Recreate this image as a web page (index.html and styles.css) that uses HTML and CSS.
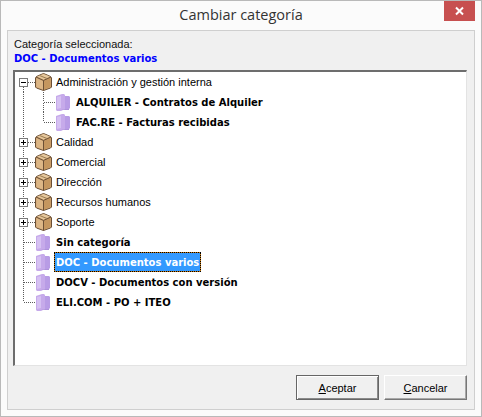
FILE: index.html
```html
<!DOCTYPE html>
<html lang="es">
<head>
<meta charset="utf-8">
<title>Cambiar categoría</title>
<link rel="stylesheet" href="styles.css">
</head>
<body>
<svg class="defs" width="0" height="0" aria-hidden="true">
  <defs>
    <symbol id="box" viewBox="0 0 17 18">
      <path d="M6 1.500 8.500 .5 11 1.500 15.500 3.500 16.500 5v9l-1 1-7 2.500-7-2.500-1-1V5l1-1.500z" fill="#cfa574" stroke="#6b4f35" stroke-linejoin="round"/>
      <path d="M1.500 5 8 8v8.500l-6.500-2.500z" fill="#dcb686"/>
      <path d="M9 8l6.500-3v9L9 16.500z" fill="#c4965f"/>
      <path d="M2 3.500 8.500 1 15 3.500 8.500 6.500z" fill="#e5c79c"/>
      <path d="M1 4 8.500 7.500 16 4M8.500 7.500v10" stroke="#6b4f35" fill="none"/>
      <path d="M4.500 2.500 12 5.500" stroke="#9a7a50" fill="none"/>
    </symbol>
    <symbol id="book" viewBox="0 0 14 17">
      <path d="M0 2 6 0h2l1 1v14l-4 2H1l-1-1z" fill="#c6aaea"/>
      <path d="M9 2h4l1 1v11l-1 1H9z" fill="#b89ce5"/>
      <path d="M1 3 5 2v12l-4 1z" fill="#d6c1f2"/>
      <path d="M5 16l4-1h4v1z" fill="#ae92da"/>
    </symbol>
    <symbol id="plus" viewBox="0 0 9 9">
      <rect x=".5" y=".5" width="8" height="8" fill="#fff" stroke="#7a7a7a"/>
      <path d="M2 4.500h5M4.500 2v5" stroke="#000" fill="none"/>
    </symbol>
    <symbol id="minus" viewBox="0 0 9 9">
      <rect x=".5" y=".5" width="8" height="8" fill="#fff" stroke="#7a7a7a"/>
      <path d="M2 4.500h5" stroke="#000" fill="none"/>
    </symbol>
  </defs>
</svg>
<div class="window">
  <header class="titlebar">
    <h1 class="title">Cambiar categoría</h1>
    <button class="close" type="button" aria-label="Cerrar">
      <svg width="11" height="10" viewBox="0 0 11 10"><path d="M2 1.500 9 8.500M9 1.500 2 8.500" stroke="#fff" stroke-width="2" fill="none"/></svg>
    </button>
  </header>
  <main class="panel">
    <p class="caption">Categoría seleccionada:</p>
    <p class="current">DOC - Documentos varios</p>
    <div class="tree">
      <div class="row">
        <svg class="gutter" width="39" height="20"><path class="dot" d="M13 10.500H20M8.500 15V20"/><use href="#minus" x="4" y="6" width="9" height="9"/><use href="#box" x="20" y="1" width="17" height="18"/></svg>
        <span class="label">Administración y gestión interna</span>
      </div>
      <div class="row">
        <svg class="gutter" width="59" height="20"><path class="dot" d="M8.500 0V20M28.500 0V10M29 10.500H40M28.500 11V20"/><use href="#book" x="41" y="2" width="14" height="17"/></svg>
        <span class="label strong">ALQUILER - Contratos de Alquiler</span>
      </div>
      <div class="row">
        <svg class="gutter" width="59" height="20"><path class="dot" d="M8.500 0V20M28.500 0V10M29 10.500H40"/><use href="#book" x="41" y="2" width="14" height="17"/></svg>
        <span class="label strong">FAC.RE - Facturas recibidas</span>
      </div>
      <div class="row">
        <svg class="gutter" width="39" height="20"><path class="dot" d="M8.500 0V20M13 10.500H20"/><use href="#plus" x="4" y="6" width="9" height="9"/><use href="#box" x="20" y="1" width="17" height="18"/></svg>
        <span class="label">Calidad</span>
      </div>
      <div class="row">
        <svg class="gutter" width="39" height="20"><path class="dot" d="M8.500 0V20M13 10.500H20"/><use href="#plus" x="4" y="6" width="9" height="9"/><use href="#box" x="20" y="1" width="17" height="18"/></svg>
        <span class="label">Comercial</span>
      </div>
      <div class="row">
        <svg class="gutter" width="39" height="20"><path class="dot" d="M8.500 0V20M13 10.500H20"/><use href="#plus" x="4" y="6" width="9" height="9"/><use href="#box" x="20" y="1" width="17" height="18"/></svg>
        <span class="label">Dirección</span>
      </div>
      <div class="row">
        <svg class="gutter" width="39" height="20"><path class="dot" d="M8.500 0V20M13 10.500H20"/><use href="#plus" x="4" y="6" width="9" height="9"/><use href="#box" x="20" y="1" width="17" height="18"/></svg>
        <span class="label">Recursos humanos</span>
      </div>
      <div class="row">
        <svg class="gutter" width="39" height="20"><path class="dot" d="M8.500 0V20M13 10.500H20"/><use href="#plus" x="4" y="6" width="9" height="9"/><use href="#box" x="20" y="1" width="17" height="18"/></svg>
        <span class="label">Soporte</span>
      </div>
      <div class="row">
        <svg class="gutter" width="39" height="20"><path class="dot" d="M8.500 0V20M9 10.500H20"/><use href="#book" x="21" y="2" width="14" height="17"/></svg>
        <span class="label strong">Sin categoría</span>
      </div>
      <div class="row">
        <svg class="gutter" width="39" height="20"><path class="dot" d="M8.500 0V20M9 10.500H20"/><use href="#book" x="21" y="2" width="14" height="17"/></svg>
        <span class="label strong selected">DOC - Documentos varios</span>
      </div>
      <div class="row">
        <svg class="gutter" width="39" height="20"><path class="dot" d="M8.500 0V20M9 10.500H20"/><use href="#book" x="21" y="2" width="14" height="17"/></svg>
        <span class="label strong">DOCV - Documentos con versión</span>
      </div>
      <div class="row">
        <svg class="gutter" width="39" height="20"><path class="dot" d="M8.500 0V10M9 10.500H20"/><use href="#book" x="21" y="2" width="14" height="17"/></svg>
        <span class="label strong">ELI.COM - PO + ITEO</span>
      </div>
    </div>
    <div class="actions">
      <button class="btn default" type="button"><u>A</u>ceptar</button>
      <button class="btn" type="button"><u>C</u>ancelar</button>
    </div>
  </main>
</div>
</body>
</html>
```
FILE: styles.css
```css
* { box-sizing: border-box; }
html, body { margin: 0; padding: 0; }
body { width: 482px; height: 417px; overflow: hidden; font-family: "Liberation Sans", sans-serif; font-size: 11px; color: #000; }
.defs { position: absolute; }
.window { width: 482px; height: 417px; display: flex; flex-direction: column; background: #fbfbfb; border: 1px solid #b9b9b9; padding: 0 6px 6px; }
.titlebar { height: 29px; flex: none; display: flex; justify-content: center; align-items: center; position: relative; }
.title { margin: -2px 0 0; font: 400 14.500px "Open Sans", sans-serif; color: #333; }
.close { position: absolute; top: 0; right: 0; width: 31px; height: 20px; padding: 0; border: 0; background: #c75050; display: flex; align-items: center; justify-content: center; }
.panel { flex: 1; display: flex; flex-direction: column; background: #f0f0f0; border: 1px solid #cfcfcf; padding: 6px 5px 0; }
.caption { margin: 0; height: 15px; line-height: 15px; padding-left: 1px; color: #111; }
.current { margin: 0; height: 17px; padding-left: 1px; font: 700 10px/14px "DejaVu Sans", sans-serif; color: #0000ff; }
.tree { height: 296px; margin-right: 2px; margin-top: 1px; background: #fff; border: 2px solid #6d6d6d; border-right: 1px solid #e3e3e3; border-bottom: 1px solid #e3e3e3; overflow: hidden; }
.row { height: 20px; display: flex; align-items: center; }
.gutter { flex: none; display: block; }
.dot { fill: none; stroke: #5a5a5a; stroke-dasharray: 1 1; }
.label { height: 20px; line-height: 20px; padding: 0 2px; white-space: nowrap; }
.strong { font: 700 10px/21px "DejaVu Sans", sans-serif; }
.selected { background: #3399ff; color: #fff; box-shadow: inset 0 0 0 1px #c87a10; outline: 1px dotted #000; outline-offset: -1px; }
.actions { display: flex; justify-content: flex-end; gap: 5px; margin-top: 9px; margin-right: 2px; }
.btn { width: 83px; height: 25px; padding: 0; font: 400 11px "Liberation Sans", sans-serif; color: #000; background: #f0f0f0; border: 1px solid; border-color: #fff #777 #777 #fff; box-shadow: inset -1px -1px 0 #a8a8a8; }
.default { border: 1px solid #666; box-shadow: inset 1px 1px 0 #fff, inset -1px -1px 0 #8a8a8a; }
```
